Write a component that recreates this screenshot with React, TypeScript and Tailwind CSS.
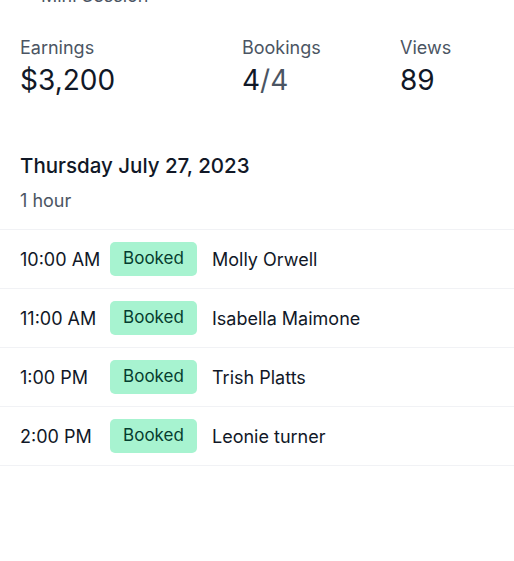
import React from "react";

const rows = [
  { time: "10:00 AM", name: "Molly Orwell" },
  { time: "11:00 AM", name: "Isabella Maimone" },
  { time: "1:00 PM", name: "Trish Platts" },
  { time: "2:00 PM", name: "Leonie turner" },
];

export default function App() {
  return (
    <div className="w-[514px] h-[561px] overflow-hidden bg-white text-[#111827]" style={{ fontFamily: "Inter, 'Noto Sans', sans-serif" }}>
      <div className="-mt-[18px] h-[28px] pl-[41px] text-[18px] leading-[28px] text-[#4b5563]">Mini Session</div>
      <div className="grid grid-cols-[222px_158px_1fr] px-5 pt-[24px]">
        <div>
          <div className="text-[18px] leading-[28px] text-[#4b5563]">Earnings</div>
          <div className="text-[28px] leading-[36px]">$3,200</div>
        </div>
        <div>
          <div className="text-[18px] leading-[28px] text-[#4b5563]">Bookings</div>
          <div className="text-[28px] leading-[36px]">4<span className="text-[#4b5563]">/4</span></div>
        </div>
        <div>
          <div className="text-[18px] leading-[28px] text-[#4b5563]">Views</div>
          <div className="text-[28px] leading-[36px]">89</div>
        </div>
      </div>
      <div className="px-5 pt-[53px]">
        <div className="text-[20.5px] leading-[30px] font-medium">Thursday July 27, 2023</div>
        <div className="mt-[6px] text-[18px] leading-[28px] text-[#4b5563]">1 hour</div>
      </div>
      <div className="mt-[14px] border-t border-[#f1f2f5]">
        {rows.map((r) => (
          <div key={r.time} className="flex h-[59px] items-center border-b border-[#f1f2f5] px-5">
            <div className="w-[90px] text-[18px]">{r.time}</div>
            <div className="flex h-[34px] w-[87px] items-center justify-center rounded-[5px] bg-[#a7f3d0] text-[17px] text-[#053d2f]">Booked</div>
            <div className="ml-[15px] text-[18px]">{r.name}</div>
          </div>
        ))}
      </div>
    </div>
  );
}
